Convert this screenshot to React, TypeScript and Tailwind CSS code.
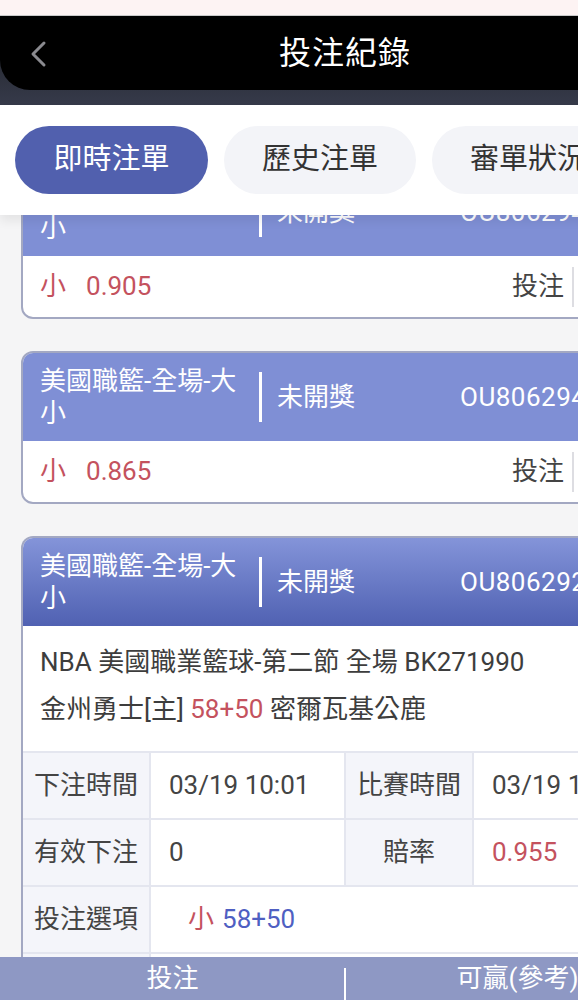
import React from 'react'

const font = "font-['Roboto','Noto_Sans_CJK_TC',sans-serif]"

function CardHeader({ id, dark }: { id: string; dark?: boolean }) {
  return (
    <div
      className={`flex items-center h-[88px] text-white ${
        dark ? 'bg-gradient-to-b from-[#8494d9] to-[#5061b2]' : 'bg-[#7f8fd5]'
      }`}
    >
      <div className="w-[236px] pl-[17px] text-[26px] leading-[32px]">美國職籃-全場-大<br />小</div>
      <div className="w-[3px] h-[50px] bg-white" />
      <div className="w-[198px] pl-[15px] text-[26px]">未開獎</div>
      <div className="text-[26px] tracking-[0.5px]">{id}</div>
    </div>
  )
}

function ShortCard({ odds, id }: { odds: string; id: string }) {
  return (
    <div className="w-[650px] ml-[21px] rounded-[12px] border-2 border-[#a3a8c2] overflow-hidden bg-white">
      <CardHeader id={id} />
      <div className="flex items-center h-[61px] pl-[17px] text-[26px]">
        <span className="text-[#c4525e]">小</span>
        <span className="text-[#c4525e] ml-[20px]">{odds}</span>
        <span className="ml-auto text-[#444]">投注</span>
        <div className="w-[2px] h-[40px] bg-[#dddde2] ml-[8px]" />
        <span className="w-[95px] pl-[16px] text-[#444]">100</span>
      </div>
    </div>
  )
}

function Label({ children }: { children?: React.ReactNode }) {
  return (
    <div className="flex items-center justify-center bg-[#f4f5fa] border-r-2 border-b-2 border-[#e4e6ef] text-[#444]">
      {children}
    </div>
  )
}

function Value({ children, className = '' }: { children?: React.ReactNode; className?: string }) {
  return (
    <div className={`flex items-center pl-[18px] border-r-2 border-b-2 border-[#e4e6ef] text-[#444] ${className}`}>
      {children}
    </div>
  )
}

export default function App() {
  return (
    <div className={`relative w-[578px] h-[1000px] overflow-hidden bg-[#f5f5f6] ${font}`}>
      <div className="w-[690px]">
        {/* status strip + title bar */}
        <div className="h-[16px] bg-[#fdf3f3] border-b border-[#c9c9c9]" />
        <div className="h-[89px] bg-gradient-to-b from-[#1d1f23] to-[#363a4a]">
          <div className="relative h-[74px] bg-black rounded-bl-[30px] flex items-center justify-center">
            <svg className="absolute left-[28px] top-[24px]" width="20" height="28" viewBox="0 0 20 28" fill="none">
              <polyline points="16,3 5,14 16,25" stroke="#8a8a8f" strokeWidth="3" strokeLinecap="round" strokeLinejoin="round" />
            </svg>
            <h1 className="text-white text-[32px] tracking-[1px]">投注紀錄</h1>
          </div>
        </div>

        {/* tabs */}
        <div className="relative z-10 h-[110px] bg-white flex items-center gap-[16px] px-[15px] shadow-[0_6px_10px_rgba(0,0,0,0.07)]">
          <div className="w-[193px] h-[68px] rounded-full bg-[#5160ae] text-white text-[29px] flex items-center justify-center">即時注單</div>
          <div className="w-[192px] h-[68px] rounded-full bg-[#f3f4f8] text-[#333] text-[29px] flex items-center justify-center">歷史注單</div>
          <div className="w-[192px] h-[68px] rounded-full bg-[#f3f4f8] text-[#333] text-[29px] flex items-center justify-center">審單狀況</div>
        </div>

        {/* list */}
        <div className="flex flex-col gap-[32px] -mt-[49px]">
          <ShortCard odds="0.905" id="OU8062945" />
          <ShortCard odds="0.865" id="OU8062943" />

          <div className="w-[650px] ml-[21px] rounded-t-[12px] border-2 border-b-0 border-[#a3a8c2] overflow-hidden bg-white">
            <CardHeader id="OU8062921" dark />
            <div className="pt-[13px] pb-[18px] pl-[17px] text-[26px] leading-[47px] text-[#3d3d3d]">
              <div>NBA 美國職業籃球-第二節 全場 BK271990</div>
              <div>
                金州勇士[主] <span className="text-[#c4525e]">58+50</span> 密爾瓦基公鹿
              </div>
            </div>
            <div className="grid grid-cols-[128px_195px_128px_1fr] auto-rows-[67px] text-[26px] border-t-2 border-[#e4e6ef]">
              <Label>下注時間</Label>
              <Value>03/19 10:01</Value>
              <Label>比賽時間</Label>
              <Value>03/19 11:00</Value>
              <Label>有效下注</Label>
              <Value>0</Value>
              <Label>賠率</Label>
              <Value className="text-[#c4525e]">0.955</Value>
              <Label>投注選項</Label>
              <Value className="col-span-3 pl-[37px]">
                <span className="text-[#c4525e]">小</span>
                <span className="ml-[8px] text-[#4f5fc2]">58+50</span>
              </Value>
              <Label />
              <Value className="col-span-3" />
            </div>
          </div>
        </div>
      </div>

      {/* bottom bar */}
      <div className="absolute left-0 bottom-0 w-[690px] h-[43px] bg-[#8e98c4] grid grid-cols-2 text-white text-[26px]">
        <div className="flex items-center justify-center">投注</div>
        <div className="relative flex items-center justify-center">
          <div className="absolute left-[-1px] top-[11px] w-[2px] h-[32px] bg-white" />
          可贏(參考)
        </div>
      </div>
    </div>
  )
}
